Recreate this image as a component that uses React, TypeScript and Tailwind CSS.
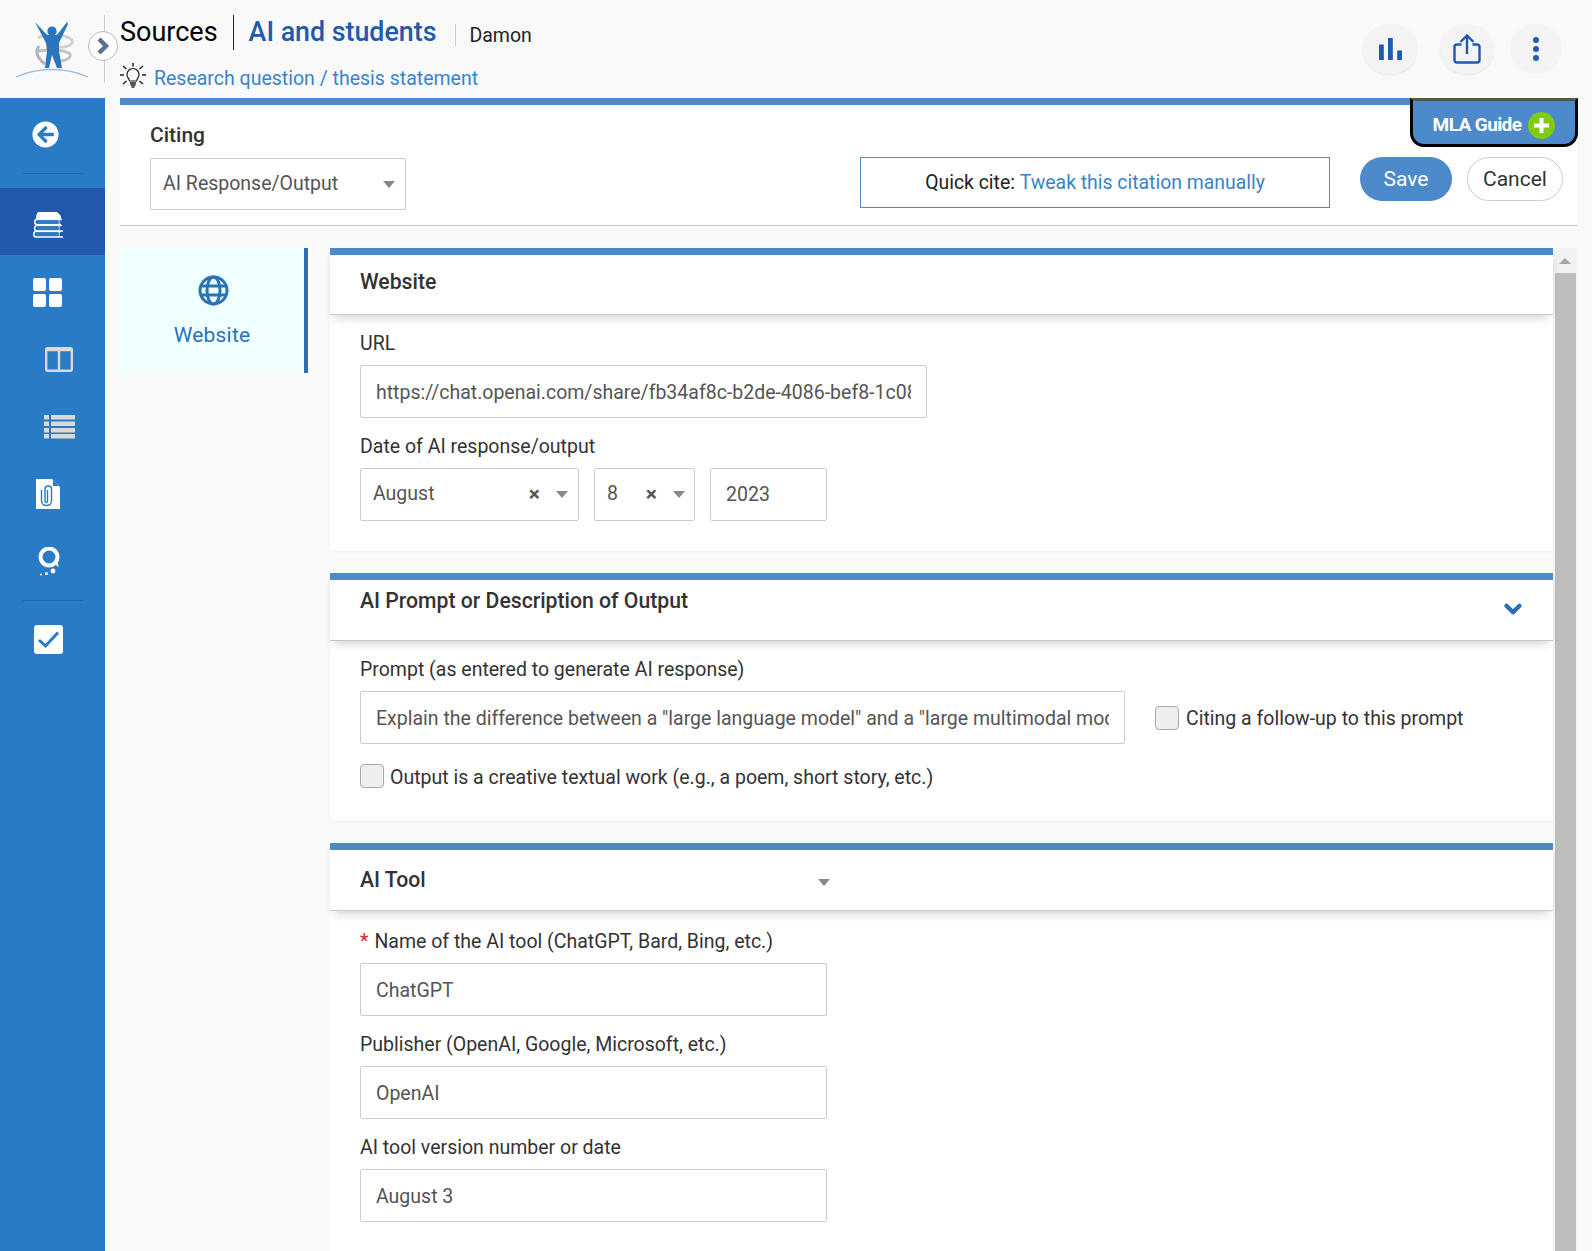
import { FaArrowCircleLeft } from 'react-icons/fa';
import { FiChevronDown } from 'react-icons/fi';

const labelClass = 'block text-[19.5px] leading-[26px] -mb-[2px] text-[#333]';
const boxClass =
    'flex items-center h-[53px] border border-[#ccc] rounded-[2px] bg-white text-[19.5px] text-[#555] overflow-hidden whitespace-nowrap';
const inputClass =
    'block h-[53px] border border-[#ccc] rounded-[2px] bg-white text-[19.5px] text-[#555] outline-none px-[15px] pt-[1px]';

function Caret({ className = '' }: { className?: string }) {
    return (
        <span
            className={`inline-block w-0 h-0 border-l-[6px] border-r-[6px] border-t-[7px] border-l-transparent border-r-transparent border-t-[#888] ${className}`}
        />
    );
}

function Logo() {
    return (
        <svg width="76" height="62" viewBox="0 0 76 62" className="block">
            <path d="M2 59 C 24 49, 52 49, 74 59" fill="none" stroke="#9dbfe0" strokeWidth="1.3" />
            <path d="M24 20 C 32 15, 50 15, 58 22 C 60 28, 50 30, 42 29" fill="none" stroke="#d2d2d2" strokeWidth="3" />
            <path d="M22 34 C 28 31, 50 31, 56 36 C 58 42, 46 44, 40 43" fill="none" stroke="#c4c4c4" strokeWidth="3" />
            <path d="M25 28 C 21 34, 23 40, 31 46" fill="none" stroke="#b5b5b5" strokeWidth="3" />
            <circle cx="38" cy="13" r="4.6" fill="#2a76bc" />
            <path
                d="M21 4 L33 17 L43 17 L53 4 L54 6 L45 25 L45 33 L48 50 L43 50 L38 37 L35 50 L31 50 L33 33 L32 25 Z"
                fill="#2a76bc"
            />
        </svg>
    );
}

function Bulb() {
    return (
        <svg width="28" height="28" viewBox="0 0 28 28" fill="none" stroke="#222" strokeWidth="1.2">
            <path d="M10.5 18 C10 15.5 8 14.5 8 11.5 A6 6 0 0 1 20 11.5 C20 14.5 18 15.5 17.5 18 Z" />
            <path d="M11 20 H17 M11.5 22 H16.5 M12.5 24 H15.5" strokeWidth="1.8" stroke="#555" />
            <path d="M14 0 V3.5 M1 12 H5 M23 12 H27 M4 3 L7.5 6 M24 3 L20.5 6 M4 21 L7.5 18 M24 21 L20.5 18" strokeWidth="1.5" />
        </svg>
    );
}

function BooksIcon() {
    return (
        <svg width="30" height="26" viewBox="0 0 30 26" fill="none">
            <path d="M5 0 H24 L28 4 V7 H3 V4 Z" fill="#fff" />
            <path d="M29 7.5 H4 C1 7.5 1 12.5 4 12.5 H28" stroke="#fff" strokeWidth="1.6" />
            <path d="M3 14 C1 14 1 19 4 19 H30" stroke="#fff" strokeWidth="1.6" />
            <path d="M28 19.5 H3 C0 19.5 0 25 3 25 H30" stroke="#fff" strokeWidth="1.6" />
            <path d="M3 13.5 H29" stroke="#fff" strokeWidth="1.4" />
            <path d="M26 8 V25" stroke="#fff" strokeWidth="1" />
            <path d="M4 8.5 H25.5 V11.8 H4 Z M4 14.5 H25.5 V18 H4 Z M3 20.5 H25.5 V24 H3 Z" fill="#2a7bc6" />
        </svg>
    );
}

function GridIcon() {
    return (
        <svg width="29" height="29" viewBox="0 0 29 29" fill="#fff">
            <rect x="0" y="0" width="13" height="13" rx="2" />
            <rect x="16" y="0" width="13" height="13" rx="2" />
            <rect x="0" y="16" width="13" height="13" rx="2" />
            <rect x="16" y="16" width="13" height="13" rx="2" />
        </svg>
    );
}

function PanelIcon() {
    return (
        <svg width="28" height="25" viewBox="0 0 28 25" fill="none" stroke="#d9d9d9" strokeWidth="2.4">
            <rect x="1.2" y="1.2" width="25.6" height="22.6" rx="1.5" />
            <path d="M14 2 V24" />
            <path d="M1.5 3 H26.5" strokeWidth="2.5" />
        </svg>
    );
}

function ListIcon() {
    const rows = [0, 6.5, 13, 19];
    return (
        <svg width="31" height="24" viewBox="0 0 31 24" fill="#d9d9d9">
            {rows.map((y) => (
                <g key={y}>
                    <rect x="0" y={y} width="5" height="4.5" />
                    <rect x="7" y={y} width="24" height="4.5" />
                </g>
            ))}
        </svg>
    );
}

function ClipDocIcon() {
    return (
        <svg width="24" height="30" viewBox="0 0 24 30">
            <path d="M0 0 H16 L24 8 V30 H0 Z" fill="#fff" />
            <path d="M17 1 L23 7 H17 Z" fill="#2a7bc6" />
            <path
                d="M11.5 11 V22 C11.5 24 9 24 9 22 V10 C9 6 15.5 6 15.5 10 V22 C15.5 28 5.5 28 5.5 22 V11"
                fill="none"
                stroke="#2a7bc6"
                strokeWidth="1.4"
            />
        </svg>
    );
}

function BubbleIcon() {
    return (
        <svg width="24" height="30" viewBox="0 0 24 30" fill="none">
            <circle cx="12" cy="10" r="8.5" stroke="#fff" strokeWidth="4" />
            <path d="M17 17 L22 20 L20 14 Z" fill="#fff" />
            <circle cx="16" cy="24" r="2.4" fill="#fff" />
            <circle cx="9.5" cy="26.5" r="1.5" fill="#fff" />
            <circle cx="4" cy="27.5" r="1" fill="#fff" />
        </svg>
    );
}

function CheckIcon() {
    return (
        <svg width="29" height="29" viewBox="0 0 29 29">
            <rect width="29" height="29" rx="3" fill="#fff" />
            <path d="M5 15 L11.5 21 L24 7.5" fill="none" stroke="#2a7bc6" strokeWidth="3" />
        </svg>
    );
}

function GlobeIcon() {
    return (
        <svg width="31" height="31" viewBox="0 0 31 31" fill="none" stroke="#2a72b5" strokeWidth="3">
            <circle cx="15.5" cy="15.5" r="13.5" />
            <ellipse cx="15.5" cy="15.5" rx="6.5" ry="13.5" />
            <path d="M3 11 H28 M3 20 H28" />
        </svg>
    );
}

function NavItem({ children, active = false }: { children: React.ReactNode; active?: boolean }) {
    return (
        <div className={`h-[67px] pt-[8px] pr-[10px] flex items-center justify-center ${active ? 'bg-[#2159ae]' : ''}`}>
            {children}
        </div>
    );
}

function Sidebar() {
    return (
        <div className="w-[105px] shrink-0 bg-[#2a7bc6] flex flex-col">
            <div className="h-[75px] pb-[2px] pr-[14px] flex items-center justify-center">
                <FaArrowCircleLeft className="text-white text-[27px]" />
            </div>
            <div className="mx-[23px] border-t border-[#2363ad]" />
            <div className="h-[14px]" />
            <NavItem active>
                <div className="-mt-[2px]">
                    <BooksIcon />
                </div>
            </NavItem>
            <NavItem>
                <GridIcon />
            </NavItem>
            <NavItem>
                <div className="pl-[22px]">
                    <PanelIcon />
                </div>
            </NavItem>
            <NavItem>
                <div className="pl-[24px]">
                    <ListIcon />
                </div>
            </NavItem>
            <NavItem>
                <ClipDocIcon />
            </NavItem>
            <NavItem>
                <div className="pt-[3px] pl-[2px]">
                    <BubbleIcon />
                </div>
            </NavItem>
            <div className="mx-[23px] mt-[10px] border-t border-[#2363ad]" />
            <div className="h-[37px] mt-[20px] pr-[9px] flex items-center justify-center">
                <CheckIcon />
            </div>
        </div>
    );
}

function Header() {
    return (
        <div className="h-[98px] bg-[#f9f9f9] flex relative">
            <div className="w-[105px] shrink-0 pl-[14px] pt-[18px] relative">
                <Logo />
                <div className="absolute right-0 top-[15px] h-[68px] border-r border-[#ccc]" />
                <div className="absolute left-[88px] top-[31px] w-[30px] h-[30px] rounded-full bg-white border border-[#bbb] flex items-center justify-center">
                    <svg width="14" height="18" viewBox="0 0 14 18" fill="none" stroke="#5c6f91" strokeWidth="4.5">
                        <path d="M3 2 L10 9 L3 16" />
                    </svg>
                </div>
            </div>
            <div className="pl-[15px] pt-[15px]">
                <div className="flex items-center h-[35px]">
                    <span className="text-[27px] text-black">Sources</span>
                    <span className="h-[35px] border-l border-[#222] ml-[15px] mr-[15px]" />
                    <span className="text-[26.8px] font-medium text-[#2159ae]">AI and students</span>
                    <span className="h-[22px] border-l border-[#ccc] ml-[19px] mr-[13px] mt-[4px]" />
                    <span className="text-[19.5px] text-[#222] mt-[6px]">Damon</span>
                </div>
                <div className="flex items-center mt-[13px] h-[28px] -ml-[1px]">
                    <Bulb />
                    <span className="text-[19.5px] text-[#3a83cc] ml-[7px] mt-[3px]">Research question / thesis statement</span>
                </div>
            </div>
            <div className="ml-auto flex items-start pt-[24px] pr-[30px]">
                <div className="w-[54px] h-[50px] rounded-full bg-[#f4f4f5] shadow-[0_1px_2px_rgba(0,0,0,0.08)] flex items-center justify-center">
                    <svg width="23" height="22" viewBox="0 0 23 22" fill="#2159ae">
                        <rect x="0" y="6.5" width="4.8" height="15.5" />
                        <rect x="9" y="0" width="4.8" height="22" />
                        <rect x="18.2" y="12.5" width="4.8" height="9.5" />
                    </svg>
                </div>
                <div className="w-[54px] h-[50px] ml-[23px] rounded-full bg-[#f4f4f5] shadow-[0_1px_2px_rgba(0,0,0,0.08)] flex items-center justify-center">
                    <svg width="28" height="30" viewBox="0 0 28 30" fill="none" stroke="#2159ae" strokeWidth="2.4">
                        <path d="M14 20 V2 M7.5 8 L14 1.5 L20.5 8" />
                        <path d="M8.5 10.5 H4 C2.5 10.5 1.5 11.5 1.5 13 V26 C1.5 27.5 2.5 28.5 4 28.5 H24 C25.5 28.5 26.5 27.5 26.5 26 V13 C26.5 11.5 25.5 10.5 24 10.5 H19.5" />
                    </svg>
                </div>
                <div className="w-[52px] h-[50px] ml-[16px] rounded-full bg-[#f4f4f5] flex flex-col items-center justify-center gap-[3px]">
                    <span className="w-[6px] h-[6px] rounded-full bg-[#2159ae]" />
                    <span className="w-[6px] h-[6px] rounded-full bg-[#2159ae]" />
                    <span className="w-[6px] h-[6px] rounded-full bg-[#2159ae]" />
                </div>
            </div>
        </div>
    );
}

function TopBar() {
    return (
        <div className="h-[128px] bg-white border-t-[7px] border-[#4d8acb] border-b border-b-[#ccc] relative flex items-start pl-[30px] shrink-0">
            <div className="absolute right-0 -top-[7px] w-[168px] h-[49px] bg-[#4d8acb] border-[3px] border-t-[3px] border-black border-t-[#555] rounded-b-[14px] flex items-center justify-center gap-[7px] pt-[6px]">
                <span className="text-[19px] font-bold text-white tracking-[-0.6px]">MLA Guide</span>
                <span className="w-[27px] h-[27px] rounded-full bg-[#80cc0c] flex items-center justify-center text-white">
                    <svg width="15" height="15" viewBox="0 0 15 15" fill="#fff">
                        <path d="M5.5 0 H9.5 V5.5 H15 V9.5 H9.5 V15 H5.5 V9.5 H0 V5.5 H5.5 Z" />
                    </svg>
                </span>
            </div>
            <div className="pt-[17px]">
                <div className="text-[21px] leading-[26px] font-medium text-[#333]">Citing</div>
                <div className={`${boxClass} w-[256px] !h-[52px] mt-[10px] pl-[12px] pr-[10px] justify-between`}>
                    <span>AI Response/Output</span>
                    <Caret />
                </div>
            </div>
            <div className="ml-auto flex items-start pt-[52px] pr-[15px]">
                <div className="w-[470px] h-[51px] border border-[#4d8acb] flex items-center justify-center text-[19.4px] text-[#222]">
                    Quick cite:&nbsp;<span className="text-[#3a83cc]">Tweak this citation manually</span>
                </div>
                <button className="w-[92px] h-[44px] ml-[30px] pt-[2px] rounded-full bg-[#4d8acb] text-white text-[21px]">Save</button>
                <button className="w-[96px] h-[44px] ml-[15px] pt-[2px] rounded-full bg-white border border-[#ccc] text-[#333] text-[21px]">
                    Cancel
                </button>
            </div>
        </div>
    );
}

function SectionHeader({
    title,
    children,
    heightClass,
    titleClass,
}: {
    title: string;
    children?: React.ReactNode;
    heightClass: string;
    titleClass: string;
}) {
    return (
        <div className={`${heightClass} border-t-[7px] border-[#4d8acb] border-b border-b-[#c8c8c8] bg-white shadow-[0_6px_10px_-4px_rgba(0,0,0,0.2)] relative flex pl-[30px]`}>
            <div className={`text-[21.2px] font-medium text-[#333] ${titleClass}`}>{title}</div>
            {children}
        </div>
    );
}

function WebsiteSection() {
    return (
        <div className="bg-white shadow-[0_1px_3px_rgba(0,0,0,0.05)]">
            <SectionHeader title="Website" heightClass="h-[67px]" titleClass="pt-[11px]" />
            <div className="pl-[30px] pt-[16px] h-[236px]">
                <label className={labelClass}>URL</label>
                <input
                    readOnly
                    value="https://chat.openai.com/share/fb34af8c-b2de-4086-bef8-1c08a2d4e5f6"
                    className={`${inputClass} w-[567px] mt-[10px]`}
                />
                <label className={`${labelClass} mt-[16px]`}>Date of AI response/output</label>
                <div className="flex gap-[15px] mt-[10px]">
                    <div className={`${boxClass} w-[219px] pl-[12px] pr-[10px]`}>
                        <span className="flex-1 -mt-[2px]">August</span>
                        <span className="text-[21px] font-bold text-[#555] mr-[16px]">×</span>
                        <Caret />
                    </div>
                    <div className={`${boxClass} w-[101px] pl-[12px] pr-[9px]`}>
                        <span className="flex-1 -mt-[2px]">8</span>
                        <span className="text-[21px] font-bold text-[#555] mr-[16px]">×</span>
                        <Caret />
                    </div>
                    <div className={`${boxClass} w-[117px] pl-[15px] pt-[1px]`}>2023</div>
                </div>
            </div>
        </div>
    );
}

function PromptSection() {
    return (
        <div className="bg-white mt-[22px] shadow-[0_1px_3px_rgba(0,0,0,0.05)]">
            <SectionHeader title="AI Prompt or Description of Output" heightClass="h-[68px]" titleClass="pt-[5px]">
                <FiChevronDown className="absolute right-[27px] top-[16px] text-[#2a6fb8] text-[26px] stroke-[4]" />
            </SectionHeader>
            <div className="pl-[30px] pt-[16px] h-[180px]">
                <label className={labelClass}>Prompt (as entered to generate AI response)</label>
                <div className="flex items-center mt-[10px]">
                    <input
                        readOnly
                        value={'Explain the difference between a "large language model" and a "large multimodal model"'}
                        className={`${inputClass} w-[765px]`}
                    />
                    <span className="w-[24px] h-[24px] ml-[30px] rounded-[4px] bg-[#eee] border border-[#aaa]" />
                    <span className="text-[19.5px] text-[#333] ml-[7px] mt-[2px]">Citing a follow-up to this prompt</span>
                </div>
                <div className="flex items-center mt-[16px]">
                    <span className="w-[24px] h-[24px] rounded-[4px] bg-[#eee] border border-[#aaa]" />
                    <span className="text-[19.5px] text-[#333] ml-[6px] mt-[3px]">
                        Output is a creative textual work (e.g., a poem, short story, etc.)
                    </span>
                </div>
            </div>
        </div>
    );
}

function ToolSection() {
    return (
        <div className="bg-white mt-[22px] flex-1">
            <SectionHeader title="AI Tool" heightClass="h-[68px]" titleClass="pt-[14px]">
                <Caret className="absolute left-[488px] top-[29px]" />
            </SectionHeader>
            <div className="pl-[30px] pt-[18px]">
                <label className={labelClass}>
                    <span className="text-[#e8202a] mr-[6px]">*</span>Name of the AI tool (ChatGPT, Bard, Bing, etc.)
                </label>
                <input readOnly value="ChatGPT" className={`${inputClass} w-[467px] mt-[10px]`} />
                <label className={`${labelClass} mt-[16px]`}>Publisher (OpenAI, Google, Microsoft, etc.)</label>
                <input readOnly value="OpenAI" className={`${inputClass} w-[467px] mt-[10px]`} />
                <label className={`${labelClass} mt-[16px]`}>AI tool version number or date</label>
                <input readOnly value="August 3" className={`${inputClass} w-[467px] mt-[10px]`} />
            </div>
        </div>
    );
}

function Scrollbar() {
    return (
        <div className="w-[24px] shrink-0 bg-[#f1f1f1] flex flex-col items-center">
            <div className="h-[25px] flex items-center justify-center">
                <span className="w-0 h-0 border-l-[6px] border-r-[6px] border-b-[6px] border-l-transparent border-r-transparent border-b-[#a3a3a3]" />
            </div>
            <div className="w-[21px] flex-1 bg-[#bdbdbd]" />
        </div>
    );
}

export default function App() {
    return (
        <div
            className="w-[1592px] h-[1251px] overflow-hidden bg-[#fafafa] flex flex-col"
            style={{ fontFamily: 'Roboto, sans-serif' }}
        >
            <Header />
            <div className="flex flex-1 min-h-0">
                <Sidebar />
                <div className="w-[1458px] ml-[15px] flex flex-col min-h-0">
                    <TopBar />
                    <div className="flex flex-1 min-h-0 pt-[22px]">
                        <div className="w-[188px] h-[125px] shrink-0 bg-[#f0ffff] border-r-[4px] border-[#2a6fb8] flex flex-col items-center pt-[27px]">
                            <div className="pl-[2px]">
                                <GlobeIcon />
                            </div>
                            <span className="text-[21px] text-[#2a72b5] mt-[14px] tracking-[0.2px]">Website</span>
                        </div>
                        <div className="w-[1223px] ml-[22px] shrink-0 flex flex-col">
                            <WebsiteSection />
                            <PromptSection />
                            <ToolSection />
                        </div>
                        <Scrollbar />
                    </div>
                </div>
            </div>
        </div>
    );
}
